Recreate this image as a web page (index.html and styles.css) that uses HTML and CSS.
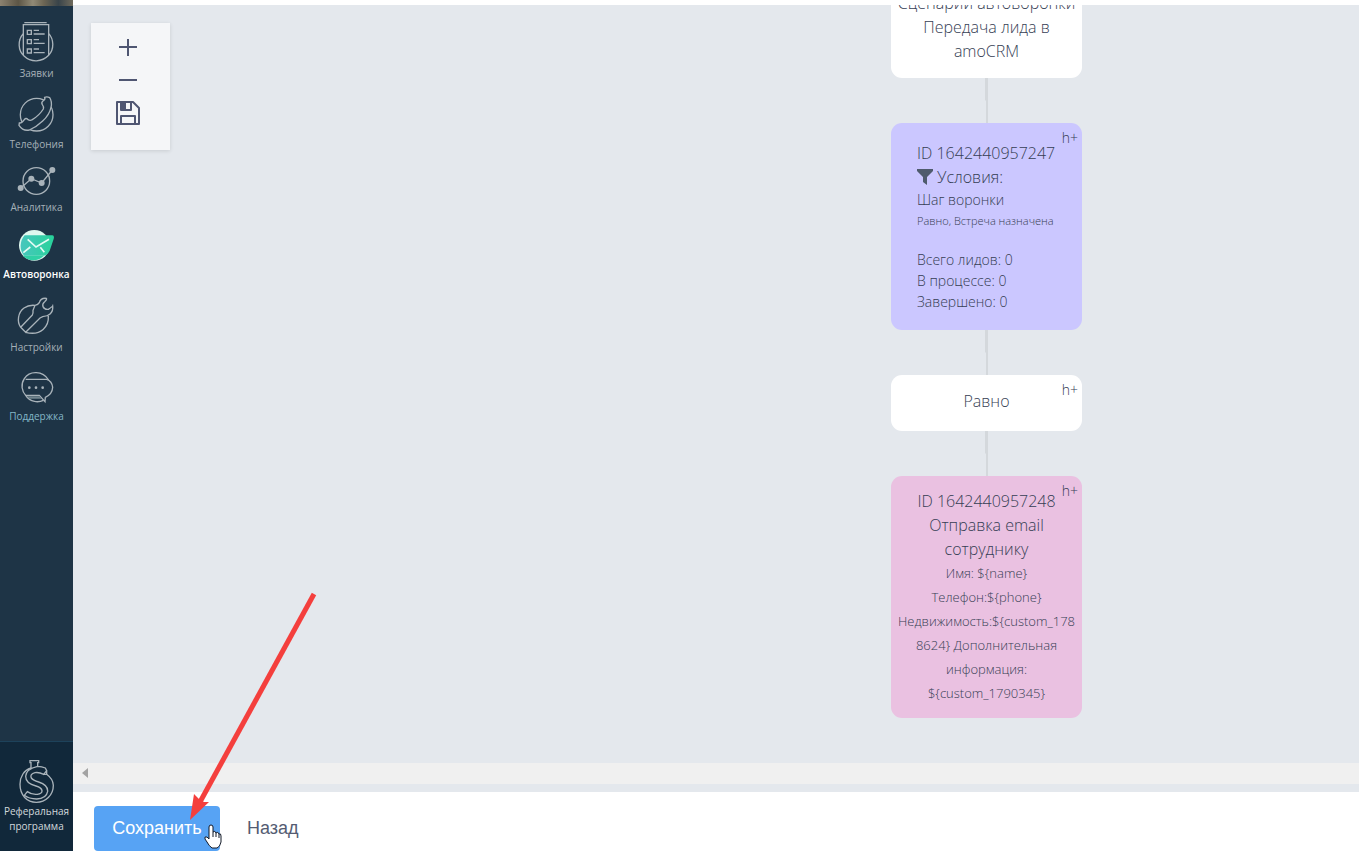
FILE: index.html
```html
<!DOCTYPE html>
<html lang="ru">
<head>
    <meta charset="utf-8">
    <title>Автоворонка</title>
    <link rel="stylesheet" href="styles.css">
</head>
<body>
    <div class="app">
        <nav class="sidebar">
            <div class="sidebar-photo"></div>
            <div class="menu">
                <a class="menu-item" href="#">
                    <svg class="icon" width="41" height="40" viewBox="0 0 123 120">
                        <path d="M25 2h67M20 8h80M22 8v90M98 8v90M22 34C4 55 6 86 24 102C45 122 78 121 98 100C115 82 114 52 98 34"/>
                        <path d="M34 25h12v12H34zM34 53h12v12H34zM34 81h12v12H34zM53 25h16M53 36h33M53 53h16M53 64h33M53 81h16M53 92h33"/>
                    </svg>
                    <span>Заявки</span>
                </a>
                <a class="menu-item" href="#">
                    <svg class="icon" width="41" height="38" viewBox="0 0 123 114">
                        <circle cx="62" cy="59" r="49"/>
                        <path class="handset" d="M9 91L10 84Q18 85 25 74Q30 67 36 74Q42 78 49 74Q70 61 82 42Q84 35 79 29Q75 22 81 18Q89 13 86 7Q93 4 101 8Q109 20 105 37Q100 60 80 78Q60 97 40 105Q21 109 9 91Z"/>
                    </svg>
                    <span>Телефония</span>
                </a>
                <a class="menu-item" href="#">
                    <svg class="icon" width="41" height="30" viewBox="0 0 123 90">
                        <circle cx="61" cy="45" r="40"/>
                        <path d="M14 66L46 38L77 51L109 12"/>
                        <g class="dots"><circle cx="14" cy="66" r="9"/><circle cx="46" cy="38" r="9"/><circle cx="77" cy="51" r="9"/><circle cx="109" cy="12" r="9"/></g>
                    </svg>
                    <span>Аналитика</span>
                </a>
                <a class="menu-item active" href="#">
                    <svg width="41" height="34" viewBox="0 0 123 102">
                        <defs>
                            <linearGradient id="mail" x1="0" y1="0" x2="1" y2="0">
                                <stop offset="0" stop-color="#48c6bd"/>
                                <stop offset="1" stop-color="#28d39b"/>
                            </linearGradient>
                        </defs>
                        <circle cx="55" cy="49" r="46" fill="#dff8ef"/>
                        <path d="M26 19H109Q116 20 113 30L101 65Q92 82 80 80H24Q13 66 14 49Q15 31 26 19Z" fill="url(#mail)"/>
                        <path d="M20 80H84Q60 102 32 89Z" fill="#2fd0a5"/>
                        <path d="M35 31L60 54L99 31M22 71L43 54M73 55L85 70" fill="none" stroke="#e4fbf4" stroke-width="5"/>
                    </svg>
                    <span>Автоворонка</span>
                </a>
                <a class="menu-item" href="#">
                    <svg class="icon" width="41" height="40" viewBox="0 0 123 120">
                        <path d="M14 94C2 77 6 49 24 36Q38 26 57 28Q66 27 70 20Q74 5 91 7Q94 10 86 17Q78 23 81 32Q86 42 97 40Q109 32 110 30Q112 44 103 53Q95 61 80 62L72 66L29 109L14 94L49 57Q52 52 51 43L57 28M97 60C99 90 76 121 29 109"/>
                    </svg>
                    <span>Настройки</span>
                </a>
                <a class="menu-item" href="#">
                    <svg class="icon" width="41" height="36" viewBox="0 0 123 108">
                        <path d="M29 31H92Q108 36 110 55Q109 76 88 85L87 98L70 79H29"/>
                        <path d="M98 33C80 5 41 4 25 29C13 47 18 67 29 79C43 101 68 101 82 94"/>
                        <path class="shade" d="M32 82h37l8 7H40z"/>
                        <g class="dots"><circle cx="40" cy="56" r="4"/><circle cx="60" cy="56" r="4"/><circle cx="80" cy="56" r="4"/></g>
                    </svg>
                    <span>Поддержка</span>
                </a>
            </div>
            <a class="referral" href="#">
                <svg class="icon" width="41" height="44" viewBox="0 0 123 132">
                    <path d="M45 24V8H42V2H68V8H65V19Q78 20 88 24L92 32L83 43Q69 36 57 38Q41 42 46 54Q51 61 68 66Q96 75 95 94Q91 116 62 117Q39 117 25 106L34 95Q48 105 64 103Q79 101 78 92Q77 83 60 78Q29 71 29 49Q30 27 65 19"/>
                    <path d="M45 24C23 31 12 51 12 73C12 106 33 127 61 127C89 127 112 106 112 76Q111 57 92 43L83 43M92 32V43"/>
                </svg>
                <span>Реферальная программа</span>
            </a>
        </nav>

        <main class="main">
            <div class="canvas">
                <div class="toolbox">
                    <button class="tool" aria-label="Увеличить">
                        <svg width="24" height="24" viewBox="0 0 24 24"><path d="M12 4v17M3 12h18" fill="none" stroke="#4f5672" stroke-width="2"/></svg>
                    </button>
                    <button class="tool" aria-label="Уменьшить">
                        <svg width="24" height="24" viewBox="0 0 24 24"><path d="M3 12h18" fill="none" stroke="#4f5672" stroke-width="2"/></svg>
                    </button>
                    <button class="tool" aria-label="Сохранить схему">
                        <svg width="24" height="24" viewBox="0 0 24 24">
                            <path d="M1 1H17L23 7V23H1ZM5 23V15H19V23M5 1V9H15V1" fill="none" stroke="#4f5672" stroke-width="2" stroke-linejoin="round"/>
                            <path d="M5 1h5v8H5z" fill="#4f5672"/>
                        </svg>
                    </button>
                </div>

                <div class="flow">
                    <div class="node node-start">Сценарий автоворонки Передача лида в amoCRM</div>
                    <div class="link"></div>
                    <div class="node node-filter">
                        <button class="add">h+</button>
                        <div>ID 1642440957247</div>
                        <div class="filter-title">
                            <svg width="16" height="16" viewBox="0 0 16 16"><path d="M0 0H16V2L10 8V16L6 13V8L0 2Z" fill="#4f5b6d"/></svg>
                            Условия:
                        </div>
                        <div class="step">Шаг воронки</div>
                        <div class="rule">Равно, Встреча назначена</div>
                        <div class="stats">
                            <div>Всего лидов: 0</div>
                            <div>В процессе: 0</div>
                            <div>Завершено: 0</div>
                        </div>
                    </div>
                    <div class="link"></div>
                    <div class="node node-equal">
                        <button class="add">h+</button>
                        Равно
                    </div>
                    <div class="link"></div>
                    <div class="node node-email">
                        <button class="add">h+</button>
                        <div>ID 1642440957248</div>
                        <div>Отправка email сотруднику</div>
                        <div class="message">Имя: ${name}<br>Телефон:${phone}<br>Недвижимость:${custom_178<wbr>8624} Дополнительная информация: ${custom_1790345}</div>
                    </div>
                </div>
            </div>
            <div class="scrollbar">
                <svg width="6" height="10" viewBox="0 0 6 10"><path d="M6 0V10L0 5Z" fill="#a3a3a3"/></svg>
            </div>
            <footer class="actions">
                <button class="save">Сохранить</button>
                <a class="back" href="#">Назад</a>
            </footer>
        </main>
    </div>

    <svg class="pointer-arrow" width="130" height="232" viewBox="0 0 130 232">
        <path d="M126 2L12 210" stroke="#f43f3d" stroke-width="5" fill="none"/>
        <path d="M2 228L6 202L12 208L16 210L21 210Z" fill="#f43f3d"/>
    </svg>
    <svg class="hand" width="18" height="25" viewBox="0 0 18 25">
        <path d="M5 15V3Q5 1 7 1Q9 1 9 3V8Q11 6 12 9Q14 7 15 10Q17 9 17 12V18Q16 23 13 24H8Q5 22 3 18L1 15Q0 12 3 13Z" fill="#fff" stroke="#111827"/>
        <path d="M9 8v5M12 9v4M15 10v4" stroke="#111827" fill="none"/>
    </svg>
</body>
</html>
```
FILE: styles.css
```css
* {
    box-sizing: border-box;
}
body {
    margin: 0;
    font-family: 'Open Sans', 'Noto Sans', sans-serif;
    color: #545c72;
    background: #fff;
}
button {
    font-family: inherit;
    color: inherit;
    background: none;
    border: none;
    padding: 0;
    cursor: pointer;
}
a {
    color: inherit;
    text-decoration: none;
}
.app {
    display: flex;
    height: 100vh;
    overflow: hidden;
}

/* Sidebar */
.sidebar {
    width: 73px;
    flex-shrink: 0;
    display: flex;
    flex-direction: column;
    background: #1e3446;
    color: #a5b0b7;
    font-size: 10px;
    line-height: 14px;
    text-align: center;
}
.sidebar-photo {
    height: 6px;
    background: linear-gradient(90deg, #8c8270, #5d5646 25%, #918a76 45%, #6d6654 60%, #39444a 80%, #6f6a5c);
}
.menu {
    flex: 1;
    display: flex;
    flex-direction: column;
    gap: 15px;
    padding-top: 16px;
}
.menu-item {
    display: flex;
    flex-direction: column;
    align-items: center;
    gap: 4px;
}
.menu-item.active {
    color: #fff;
    font-weight: 600;
}
.menu-item:last-child {
    color: #84b6c6;
}
.icon {
    fill: none;
    stroke: #a9b3ba;
    stroke-width: 4;
}
.icon .handset {
    fill: #1e3446;
}
.icon .dots {
    fill: #a9b3ba;
    stroke: none;
}
.icon .shade {
    fill: #71848e;
    stroke: none;
}
.referral {
    display: flex;
    flex-direction: column;
    align-items: center;
    padding: 18px 0 17px;
    border-top: 1px solid #1d425a;
    background: #11283a;
    color: #d2d8dc;
    line-height: 15px;
}

/* Canvas */
.main {
    flex: 1;
    min-width: 0;
    display: flex;
    flex-direction: column;
    padding-top: 5px;
}
.canvas {
    position: relative;
    flex: 1;
    min-height: 0;
    overflow: hidden;
    background: #e4e8ed;
}
.toolbox {
    position: absolute;
    left: 18px;
    top: 18px;
    width: 79px;
    height: 127px;
    padding: 7px 6px 0 0;
    background: #f5f6f8;
    box-shadow: 0 1px 4px rgba(0, 0, 0, 0.12);
}
.tool {
    display: flex;
    align-items: center;
    justify-content: center;
    width: 100%;
    height: 33px;
}
.flow {
    position: absolute;
    left: 818px;
    top: -33px;
    width: 191px;
    display: flex;
    flex-direction: column;
    color: #363e54;
    font-size: 16px;
    font-weight: 300;
    line-height: 24px;
}
.node {
    position: relative;
    border-radius: 11px;
    text-align: center;
    background: #fff;
}
.node-start {
    padding: 19px 4px 15px;
}
.node-filter {
    padding: 18px 8px 18px 26px;
    text-align: left;
    background: #cbc7ff;
}
.node-equal {
    padding: 14px 4px 18px;
}
.node-email {
    padding: 13px 6px;
    background: #eac1e1;
}
.add {
    position: absolute;
    top: 5px;
    right: 4px;
    font-size: 14px;
    font-weight: 300;
    line-height: 20px;
}
.filter-title {
    display: flex;
    align-items: center;
    gap: 4px;
}
.step {
    font-size: 14px;
    line-height: 22px;
}
.rule {
    font-size: 11px;
    line-height: 20px;
    white-space: nowrap;
}
.stats {
    margin-top: 18px;
    font-size: 14px;
    line-height: 21px;
}
.message {
    font-size: 13px;
}
/* connector narrows halfway down */
.link {
    align-self: center;
    width: 3px;
    height: 45px;
    background: linear-gradient(#d4d8dc, #d4d8dc) right / 2px 100% no-repeat,
                linear-gradient(#d4d8dc, #d4d8dc) left top / 1px 50% no-repeat;
}
.scrollbar {
    height: 29px;
    padding: 5px 9px;
    line-height: 0;
    background: #f0f0f0;
    border-bottom: 8px solid #e4e8ed;
}

/* Bottom bar */
.actions {
    display: flex;
    gap: 27px;
    padding: 14px 21px 0;
    font-family: 'Liberation Sans', Arial, sans-serif;
    font-size: 18px;
    line-height: 45px;
}
.save {
    width: 126px;
    height: 45px;
    border-radius: 4px;
    background: #57a3f4;
    color: #fff;
    font-size: 18px;
}

/* Overlay */
.pointer-arrow {
    position: fixed;
    left: 188px;
    bottom: 27px;
    pointer-events: none;
}
.hand {
    position: fixed;
    left: 204px;
    bottom: 2px;
    pointer-events: none;
}
```
